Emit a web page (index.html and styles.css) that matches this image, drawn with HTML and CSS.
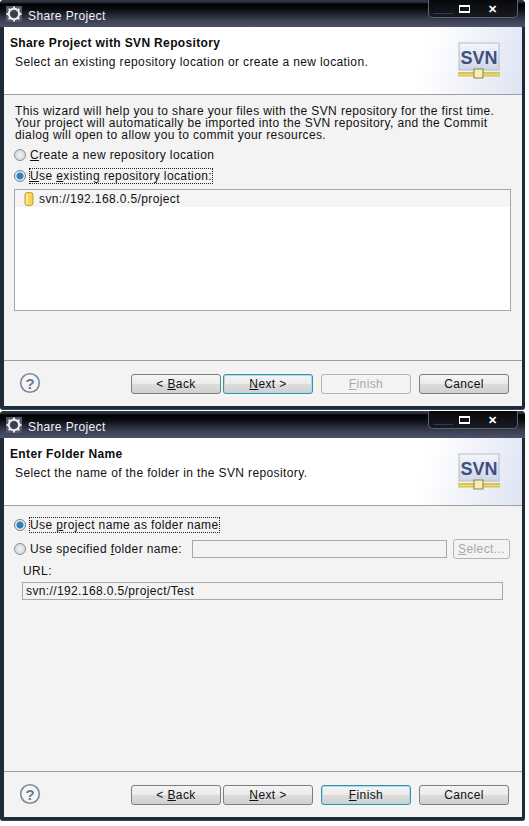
FILE: index.html
```html
<!DOCTYPE html>
<html>
<head>
<meta charset="utf-8">
<title>Share Project</title>
<link rel="stylesheet" href="styles.css">
</head>
<body>
<svg class="defs" width="0" height="0">
  <defs>
    <linearGradient id="svnbg" x1="0" y1="0" x2="0" y2="1"><stop offset="0" stop-color="#f4f6fa"/><stop offset="1" stop-color="#cfd6e4"/></linearGradient>
    <symbol id="gear" viewBox="0 0 18 18">
      <rect x="1" y="1" width="16" height="16" fill="#55586a"/>
      <circle cx="9" cy="9" r="5.2" fill="none" stroke="#f0f0f4" stroke-width="2"/>
      <path d="M9 1.5v2.5M9 14v2.500M1.500 9h2.500M14 9h2.500M3.700 3.700l1.800 1.800M12.500 12.500l1.800 1.800M3.700 14.300l1.800-1.800M12.500 5.500l1.800-1.800" stroke="#e8e8ee" stroke-width="2"/>
      <circle cx="9" cy="9" r="3.600" fill="#3c3f50"/>
    </symbol>
    <symbol id="svn" viewBox="0 0 42 40">
      <rect x="1" y="1" width="40" height="27" fill="url(#svnbg)" stroke="#b5bccb"/>
      <text x="21" y="22" text-anchor="middle" class="svn-text">SVN</text>
      <path d="M0 31h42M0 33.500h42" stroke="#d8c64a" stroke-width="1.800"/>
      <rect x="16" y="27" width="9" height="9" fill="#f6eeb8" stroke="#8d8040"/>
    </symbol>
    <symbol id="help" viewBox="0 0 22 22">
      <circle cx="11" cy="11" r="9.300" fill="#f4f5f8" stroke="#7e8798" stroke-width="1.600"/>
      <text x="11" y="16.500" text-anchor="middle" class="help-text">?</text>
    </symbol>
  </defs>
</svg>
<main class="stack">
  <section class="window">
    <header class="titlebar">
      <svg class="gear"><use href="#gear"/></svg>
      <span class="title">Share Project</span>
      <div class="controls"><span class="min"></span><span class="max"></span><span class="close">✕</span></div>
    </header>
    <div class="banner">
      <div class="banner-text">
        <h1>Share Project with SVN Repository</h1>
        <p>Select an existing repository location or create a new location.</p>
      </div>
      <svg class="logo"><use href="#svn"/></svg>
    </div>
    <div class="body">
      <p class="intro">This wizard will help you to share your files with the SVN repository for the first time.<br>Your project will automatically be imported into the SVN repository, and the Commit<br>dialog will open to allow you to commit your resources.</p>
      <div class="radio-row first"><span class="radio"></span><span><u>C</u>reate a new repository location</span></div>
      <div class="radio-row second"><span class="radio on"></span><span class="focus"><u>U</u>se <u>e</u>xisting repository location:</span></div>
      <div class="tree">
        <div class="tree-row">
          <svg class="repo" viewBox="0 0 10 14"><rect x="1" y="0.500" width="8" height="13" rx="2.500" fill="#f5d55a" stroke="#c79a22"/><path d="M3 2v10" stroke="#fdf2b8" stroke-width="1.500"/></svg>
          <span>svn://192.168.0.5/project</span>
        </div>
      </div>
    </div>
    <footer class="buttons">
      <svg class="help"><use href="#help"/></svg>
      <button class="btn">&lt; <u>B</u>ack</button>
      <button class="btn default"><u>N</u>ext &gt;</button>
      <button class="btn disabled finish"><u>F</u>inish</button>
      <button class="btn">Cancel</button>
    </footer>
  </section>

  <section class="window">
    <header class="titlebar">
      <svg class="gear"><use href="#gear"/></svg>
      <span class="title">Share Project</span>
      <div class="controls"><span class="min"></span><span class="max"></span><span class="close">✕</span></div>
    </header>
    <div class="banner">
      <div class="banner-text">
        <h1>Enter Folder Name</h1>
        <p>Select the name of the folder in the SVN repository.</p>
      </div>
      <svg class="logo"><use href="#svn"/></svg>
    </div>
    <div class="body body-folder">
      <div class="radio-row"><span class="radio on"></span><span class="focus">Use <u>p</u>roject name as folder name</span></div>
      <div class="radio-row spec">
        <span class="radio"></span><span class="spec-label">Use specified <u>f</u>older name:</span>
        <span class="input blank"></span>
        <button class="btn small disabled"><u>S</u>elect...</button>
      </div>
      <div class="url-label">URL:</div>
      <div class="input url">svn://192.168.0.5/project/Test</div>
    </div>
    <footer class="buttons">
      <svg class="help"><use href="#help"/></svg>
      <button class="btn">&lt; <u>B</u>ack</button>
      <button class="btn"><u>N</u>ext &gt;</button>
      <button class="btn default finish"><u>F</u>inish</button>
      <button class="btn">Cancel</button>
    </footer>
  </section>
</main>
</body>
</html>
```

FILE: styles.css
```css
* { box-sizing: border-box; }
html, body { margin: 0; padding: 0; background: #fff; }
body { font: 12px/14px "Liberation Sans", sans-serif; letter-spacing: 0.38px; color: #111; overflow: hidden; }
.defs { position: absolute; }
.stack { display: flex; flex-direction: column; gap: 1px; width: 525px; }

.window {
  width: 525px; height: 410px;
  display: flex; flex-direction: column;
  background: #1f2a38;
  border-radius: 4px 4px 3px 3px;
  padding: 0 3px 3px 4px;
  border-bottom: 1px solid #39424f;
}
.titlebar {
  height: 27px; margin: 0 -3px 0 -4px; padding-left: 5px;
  display: flex; align-items: center;
  background: linear-gradient(#2c3542 0, #2c3542 2px, #000 4px, #0a0b10 9px, #3a3f52 20px, #4c5268 27px);
  border-radius: 4px 4px 0 0;
  position: relative;
}
.gear { width: 18px; height: 18px; flex: none; }
.title { margin-left: 5px; color: #f4f4f8; font-size: 12px; padding-top: 4px; }
.controls {
  margin-left: auto; margin-right: 7px; align-self: flex-start;
  width: 90px; height: 18px; display: flex; align-items: center;
  border: 1px solid #5c6472; border-top: 0; border-radius: 0 0 5px 5px;
  background: linear-gradient(#08090c, #171a22);
}
.min { width: 20px; height: 1px; margin: 10px 0 0 4px; background: #2f3a4a; flex: none; }
.max { width: 11px; height: 8px; margin-left: 6px; border: 1px solid #fff; border-top-width: 2px; border-bottom-width: 2px; flex: none; }
.close { margin-left: 18px; color: #fff; font-size: 11px; font-weight: bold; line-height: 12px; }

.banner {
  height: 68px; flex: none;
  display: flex; justify-content: space-between;
  background: linear-gradient(105deg, #fff 80%, #dfe4f2 100%);
  border-bottom: 1px solid #a0a0a0;
}
.banner-text { padding: 9px 0 0 6px; }
h1 { margin: 0; font-size: 12px; line-height: 14px; font-weight: bold; color: #0c0c0c; letter-spacing: 0.35px; }
.banner p { margin: 5px 0 0 5px; }
.logo { width: 42px; height: 40px; margin: 15px 22px 0 0; flex: none; }
.svn-text { font: bold 18px "Liberation Sans", sans-serif; fill: #3f4f82; letter-spacing: 0; }

.body { flex: 1; background: #f3f3f3; padding: 10px 10px 0; border-bottom: 1px solid #a0a0a0; }
.intro { margin: 0 0 0 1px; line-height: 12px; white-space: nowrap; }
.radio-row { display: flex; align-items: center; height: 16px; }
.first { margin-top: 6px; }
.second { margin-top: 5px; }
.radio {
  width: 12px; height: 12px; flex: none; margin-right: 4px; border-radius: 50%;
  border: 1px solid #8f8f8f; background: radial-gradient(#f4f4f4, #cfcfcf);
}
.radio.on { background: radial-gradient(#2f7fb8 0 3px, #e9eef3 4px); border-color: #6c7f90; }
.focus { outline: 1px dotted #222; outline-offset: 0; }
.tree { height: 122px; margin: 5px 0 0; width: 497px; background: #fff; border: 1px solid #a8a8a8; }
.tree-row { height: 17px; background: #f5f5f5; display: flex; align-items: center; padding-left: 9px; gap: 5px; }
.repo { width: 10px; height: 14px; flex: none; }

.body-folder { padding-top: 11px; }
.spec { margin-top: 6px; height: 20px; }
.spec-label { width: 162px; flex: none; }
.input { height: 18px; border: 1px solid #a8a8a8; background: #f3f3f3; }
.blank { width: 255px; flex: none; }
.url-label { margin: 5px 0 0 9px; }
.url { width: 481px; margin: 4px 0 0 8px; padding-left: 3px; line-height: 16px; }

.buttons { height: 45px; flex: none; background: #f3f3f3; display: flex; align-items: flex-start; padding: 13px 0 0 127px; position: relative; }
.help { width: 22px; height: 22px; position: absolute; left: 15px; top: 11px; }
.help-text { font: bold 15px "Liberation Sans", sans-serif; fill: #6e7688; letter-spacing: 0; }
.btn {
  width: 90px; height: 20px; padding: 0; margin-right: 2px;
  font: inherit; letter-spacing: inherit; color: #111;
  border: 1px solid #7e7e7e; border-radius: 3px;
  background: linear-gradient(#f4f4f4 0, #ebebeb 50%, #dcdcdc 52%, #d0d0d0 100%);
}
.btn.finish { margin-left: 6px; margin-right: 8px; }
.btn.default { border-color: #3d8fa8; box-shadow: inset 0 0 0 1px #a8dcec; }
.btn.disabled { color: #a8a8a8; border-color: #b4b4b4; background: #f3f3f3; }
.btn.small { width: 57px; margin: 0 0 0 6px; }
```
